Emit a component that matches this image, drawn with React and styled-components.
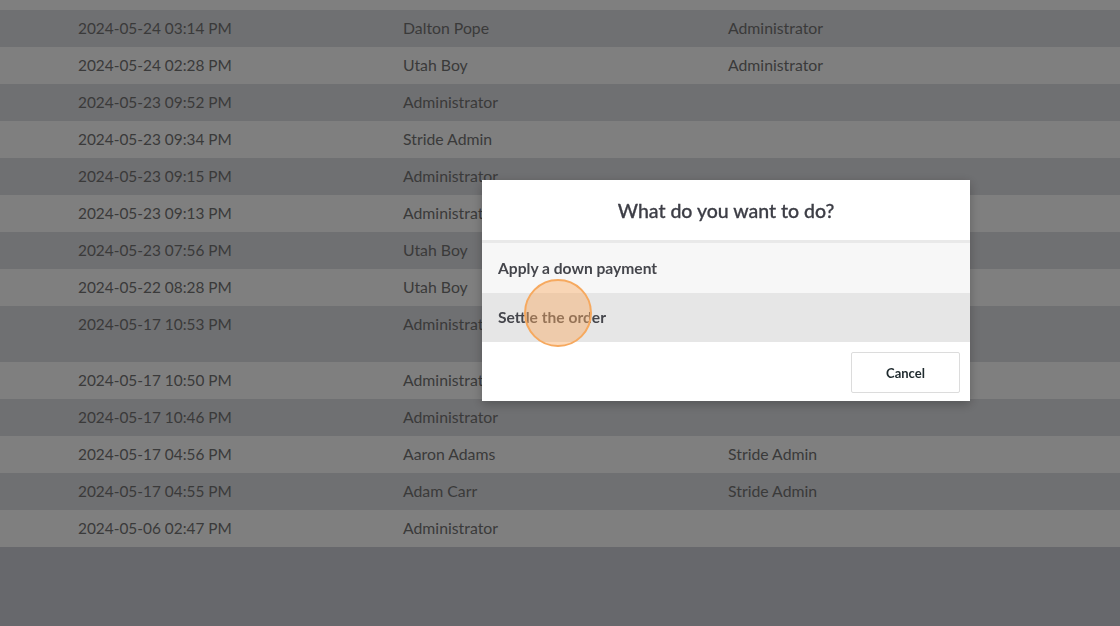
import React from "react";
import styled, { createGlobalStyle } from "styled-components";

const rows = [
  { date: "", user: "", by: "", shade: "light", short: true },
  { date: "2024-05-24 03:14 PM", user: "Dalton Pope", by: "Administrator", shade: "dark" },
  { date: "2024-05-24 02:28 PM", user: "Utah Boy", by: "Administrator", shade: "light" },
  { date: "2024-05-23 09:52 PM", user: "Administrator", by: "", shade: "dark" },
  { date: "2024-05-23 09:34 PM", user: "Stride Admin", by: "", shade: "light" },
  { date: "2024-05-23 09:15 PM", user: "Administrator", by: "", shade: "dark" },
  { date: "2024-05-23 09:13 PM", user: "Administrator", by: "", shade: "light" },
  { date: "2024-05-23 07:56 PM", user: "Utah Boy", by: "", shade: "dark" },
  { date: "2024-05-22 08:28 PM", user: "Utah Boy", by: "", shade: "light" },
  { date: "2024-05-17 10:53 PM", user: "Administrator", by: "", shade: "dark", tall: true },
  { date: "2024-05-17 10:50 PM", user: "Administrator", by: "", shade: "light" },
  { date: "2024-05-17 10:46 PM", user: "Administrator", by: "", shade: "dark" },
  { date: "2024-05-17 04:56 PM", user: "Aaron Adams", by: "Stride Admin", shade: "light" },
  { date: "2024-05-17 04:55 PM", user: "Adam Carr", by: "Stride Admin", shade: "dark" },
  { date: "2024-05-06 02:47 PM", user: "Administrator", by: "", shade: "light" },
];

function App() {
  return (
    <>
      <GlobalStyle />
      <Page>
        <Table>
          {rows.map((r, i) => (
            <Row key={i} $shade={r.shade} $tall={r.tall} $short={r.short}>
              <Cell>{r.date}</Cell>
              <Cell $wide>{r.user}</Cell>
              <Cell $wide>{r.by}</Cell>
            </Row>
          ))}
        </Table>
      </Page>
      <Backdrop />
      <Modal>
        <ModalHeader>What do you want to do?</ModalHeader>
        <Options>
          <Option>Apply a down payment</Option>
          <Option $active>Settle the order</Option>
        </Options>
        <ModalFooter>
          <CancelButton>Cancel</CancelButton>
        </ModalFooter>
      </Modal>
      <ClickMark />
    </>
  );
}

const GlobalStyle = createGlobalStyle`
  html, body {
    margin: 0;
    padding: 0;
    height: 100%;
    overflow: hidden;
    background: #ced0d8;
    font-family: Lato, "Liberation Sans", sans-serif;
  }
`;

const Page = styled.div`
  min-height: 626px;
  background: #ced0d8;
`;

const Table = styled.div`
  display: flex;
  flex-direction: column;
`;

const Row = styled.div`
  display: grid;
  grid-template-columns: 325px 325px 1fr;
  align-items: start;
  padding: 0 0 0 78px;
  height: ${(p) => (p.$short ? "10px" : p.$tall ? "56px" : "37px")};
  overflow: hidden;
  background: ${(p) => (p.$shade === "light" ? "#ffffff" : "#dfe0e4")};
`;

const Cell = styled.div`
  font-size: ${(p) => (p.$wide ? "15.8px" : "15.4px")};
  line-height: 36px;
  color: #757575;
  white-space: nowrap;
`;

const Backdrop = styled.div`
  position: fixed;
  inset: 0;
  background: rgba(0, 0, 0, 0.5);
`;

const Modal = styled.div`
  position: fixed;
  left: 482px;
  top: 180px;
  width: 488px;
  background: #ffffff;
  box-shadow: 0 3px 10px rgba(0, 0, 0, 0.25);
  display: flex;
  flex-direction: column;
`;

const ModalHeader = styled.div`
  height: 60px;
  display: flex;
  align-items: center;
  justify-content: center;
  font-size: 19.5px;
  font-weight: 500;
  -webkit-text-stroke: 0.3px #3d3e46;
  color: #3d3e46;
  border-bottom: 3px solid #e9e9e9;
`;

const Options = styled.div`
  display: flex;
  flex-direction: column;
`;

const Option = styled.div`
  height: ${(p) => (p.$active ? "49px" : "50px")};
  box-sizing: border-box;
  display: flex;
  align-items: center;
  padding: ${(p) => (p.$active ? "0 0 2px 16px" : "0 0 0 16px")};
  font-size: 15.6px;
  font-weight: 700;
  color: #45464c;
  background: ${(p) => (p.$active ? "#e6e6e6" : "#f7f7f7")};
`;

const ModalFooter = styled.div`
  height: 59px;
  box-sizing: border-box;
  display: flex;
  align-items: flex-start;
  justify-content: flex-end;
  padding: 10px 10px 0 0;
`;

const CancelButton = styled.button`
  width: 109px;
  height: 41px;
  background: #ffffff;
  border: 1px solid #dcdcdc;
  border-radius: 2px;
  font-family: Lato, "Liberation Sans", sans-serif;
  font-size: 13px;
  font-weight: 700;
  color: #1f2a2e;
  cursor: pointer;
`;

const ClickMark = styled.div`
  position: fixed;
  left: 524px;
  top: 279px;
  width: 68px;
  height: 68px;
  border-radius: 50%;
  box-sizing: border-box;
  border: 2.5px solid #f6a95f;
  background: rgba(248, 170, 100, 0.45);
`;

export default App;
